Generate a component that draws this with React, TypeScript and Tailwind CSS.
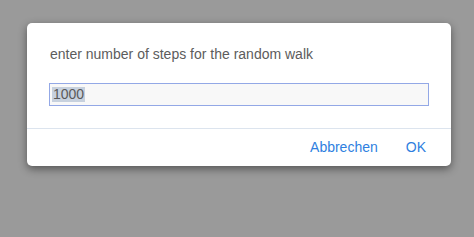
export default function App() {
  return (
    <div className="w-[474px] h-[237px] bg-[#9a9a9a] pt-[23px] pl-[27px] font-['Liberation_Sans',Arial,sans-serif]">
      <div className="w-[424px] h-[143px] bg-white rounded-[5px] shadow-[0_3px_8px_rgba(0,0,0,0.45)] flex flex-col">
        <div className="px-[22px] pt-[23px] h-[105px]">
          <p className="text-[14px] leading-[16px] text-[#5c5c5c] ml-[1px]">
            enter number of steps for the random walk
          </p>
          <div className="mt-[21px] w-[380px] h-[23px] border border-[#93a8e6] bg-[#f8f8f8] flex items-center pl-[2px]">
            <span className="text-[14px] leading-[15px] text-[#5a5a5a] bg-[#c7d1de] px-[1px]">1000</span>
          </div>
        </div>
        <div className="h-px bg-[#dce4ee]" />
        <div className="flex-1 flex items-center justify-end pr-[25px] gap-[28px] text-[14px] text-[#2f7fe0]">
          <span>Abbrechen</span>
          <span>OK</span>
        </div>
      </div>
    </div>
  );
}
